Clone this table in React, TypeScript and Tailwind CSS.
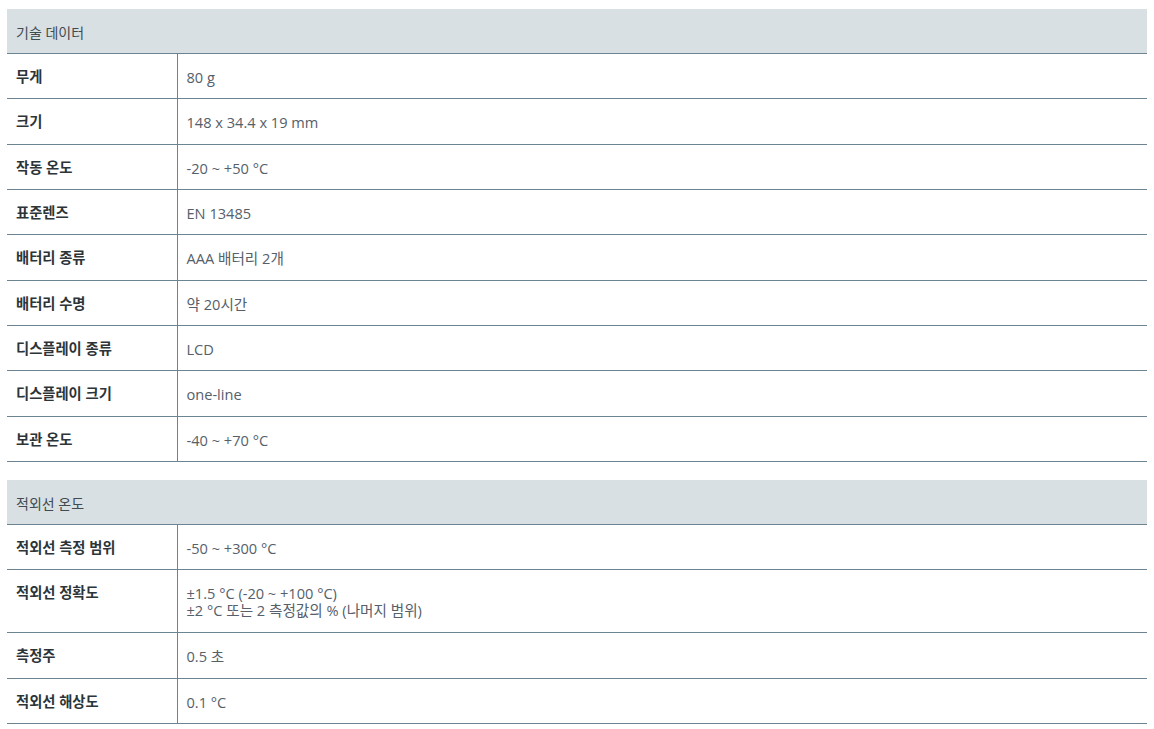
const sections: { title: string; rows: [string, string[]][] }[] = [
  {
    title: "기술 데이터",
    rows: [
      ["무게", ["80 g"]],
      ["크기", ["148 x 34.4 x 19 mm"]],
      ["작동 온도", ["-20 ~ +50 °C"]],
      ["표준렌즈", ["EN 13485"]],
      ["배터리 종류", ["AAA 배터리 2개"]],
      ["배터리 수명", ["약 20시간"]],
      ["디스플레이 종류", ["LCD"]],
      ["디스플레이 크기", ["one-line"]],
      ["보관 온도", ["-40 ~ +70 °C"]],
    ],
  },
  {
    title: "적외선 온도",
    rows: [
      ["적외선 측정 범위", ["-50 ~ +300 °C"]],
      ["적외선 정확도", ["±1.5 °C (-20 ~ +100 °C)", "±2 °C 또는 2 측정값의 % (나머지 범위)"]],
      ["측정주", ["0.5 초"]],
      ["적외선 해상도", ["0.1 °C"]],
    ],
  },
]

export default function App() {
  return (
    <div
      className="min-h-screen bg-white pt-[9px] pl-[7px] text-[14px]"
      style={{ fontFamily: '"Open Sans", "Noto Sans CJK KR", sans-serif' }}
    >
      {sections.map((s) => (
        <table key={s.title} className="w-[1140px] border-collapse mb-[18px]">
          <thead>
            <tr className="bg-[#d8e0e3] border-b border-[#6c8391]">
              <th colSpan={2} className="text-left font-normal text-[#404a50] pl-[9px] pt-[15px] pb-[12px] leading-[17px]">
                {s.title}
              </th>
            </tr>
          </thead>
          <tbody>
            {s.rows.map(([label, values]) => (
              <tr key={label} className="border-b border-[#6c8391]">
                <td className="w-[170px] align-top font-bold text-[14.3px] text-[#2c3438] pl-[9px] pt-[15px] pb-[13px] leading-[16.33px] border-r border-[#6c8391]">
                  {label}
                </td>
                <td className={`align-top text-[14.6px] text-[#55606a] pl-[9px] pt-[15px] pb-[13px] ${values.length > 1 ? "leading-[17px]" : "leading-[16.33px]"}`}>
                  {values.map((v) => (
                    <div key={v}>{v}</div>
                  ))}
                </td>
              </tr>
            ))}
          </tbody>
        </table>
      ))}
    </div>
  )
}
